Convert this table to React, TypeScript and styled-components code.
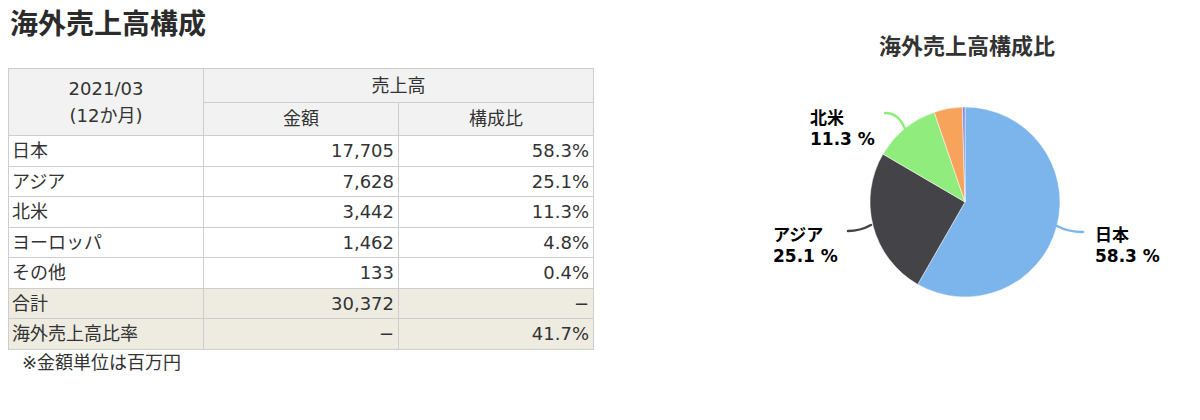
import React from "react";
import styled, { createGlobalStyle } from "styled-components";

const GlobalStyle = createGlobalStyle`
  html, body {
    margin: 0;
    padding: 0;
    background: #ffffff;
  }
  body {
    font-family: "DejaVu Sans", "Noto Sans CJK JP", sans-serif;
    color: #333333;
  }
`;

const Page = styled.div`
  display: flex;
  align-items: flex-start;
  padding: 0 8px;
  width: 1200px;
  box-sizing: border-box;
`;

const LeftColumn = styled.section`
  width: 586px;
  flex: none;
`;

const Heading = styled.h2`
  margin: 5px 0 29px 2px;
  font-family: "Noto Sans CJK JP", sans-serif;
  font-size: 28px;
  line-height: 34px;
  font-weight: 700;
  color: #2b2b2b;
`;

const Table = styled.table`
  width: 586px;
  border-collapse: collapse;
  table-layout: fixed;
  font-size: 18px;
  color: #333;
`;

const HeadCell = styled.th<{ $tall?: boolean }>`
  background: #f2f2f2;
  border: 1px solid #cdcdcd;
  font-weight: 400;
  text-align: center;
  padding: 0 4px;
  height: ${(p) => (p.$tall ? "33px" : "32px")};
  line-height: 28px;
`;

const HeadLine = styled.span`
  display: block;
  height: 28px;
  line-height: 28px;
  &:last-child {
    margin-top: -1px;
  }
`;

const Cell = styled.td<{ $align?: "left" | "right"; $sum?: boolean }>`
  background: ${(p) => (p.$sum ? "#eeebe1" : "#ffffff")};
  border: 1px solid #cdcdcd;
  text-align: ${(p) => p.$align ?? "left"};
  padding: 0 4px 0 3px;
  height: 29.5px;
  line-height: 29px;
  white-space: nowrap;
`;

const Note = styled.p`
  margin: 2px 0 0 14px;
  font-size: 18px;
  line-height: 22px;
`;

const RightColumn = styled.section`
  width: 420px;
  margin-left: 163px;
  flex: none;
  display: flex;
  flex-direction: column;
  align-items: center;
`;

const ChartTitle = styled.h3`
  margin: 29px 0 0 0;
  font-family: "Noto Sans CJK JP", sans-serif;
  font-size: 22px;
  line-height: 30px;
  font-weight: 700;
  color: #333333;
`;

const ChartSvg = styled.svg`
  display: block;
  overflow: visible;
`;

const LabelText = styled.text`
  font-family: "DejaVu Sans", "Noto Sans CJK JP", sans-serif;
  font-size: 17px;
  font-weight: 700;
  fill: #000000;
`;

type Row = { name: string; amount: string; ratio: string; sum?: boolean };

const rows: Row[] = [
  { name: "日本", amount: "17,705", ratio: "58.3%" },
  { name: "アジア", amount: "7,628", ratio: "25.1%" },
  { name: "北米", amount: "3,442", ratio: "11.3%" },
  { name: "ヨーロッパ", amount: "1,462", ratio: "4.8%" },
  { name: "その他", amount: "133", ratio: "0.4%" },
  { name: "合計", amount: "30,372", ratio: "−", sum: true },
  { name: "海外売上高比率", amount: "−", ratio: "41.7%", sum: true },
];

const slices = [
  { value: 17705, color: "#7cb5ec" },
  { value: 7628, color: "#434348" },
  { value: 3442, color: "#90ed7d" },
  { value: 1462, color: "#f7a35c" },
  { value: 133, color: "#8085e9" },
];

const CX = 208;
const CY = 143;
const R = 95;

function arcPath(a0: number, a1: number) {
  const x0 = CX + R * Math.cos(a0);
  const y0 = CY + R * Math.sin(a0);
  const x1 = CX + R * Math.cos(a1);
  const y1 = CY + R * Math.sin(a1);
  const large = a1 - a0 > Math.PI ? 1 : 0;
  return `M ${CX} ${CY} L ${x0} ${y0} A ${R} ${R} 0 ${large} 1 ${x1} ${y1} Z`;
}

function Pie() {
  const total = slices.reduce((s, d) => s + d.value, 0);
  let angle = -Math.PI / 2;
  const paths = slices.map((d, i) => {
    const a0 = angle;
    const a1 = angle + (d.value / total) * Math.PI * 2;
    angle = a1;
    return <path key={i} d={arcPath(a0, a1)} fill={d.color} stroke="#ffffff" strokeWidth={0.5} />;
  });
  return (
    <ChartSvg width={420} height={300} viewBox="0 0 420 300">
      {paths}
      <path d="M 300 167 Q 311 173 326 173" fill="none" stroke="#7cb5ec" strokeWidth={2.5} strokeLinecap="round" />
      <path d="M 114 166 Q 103 172 91 172" fill="none" stroke="#434348" strokeWidth={2.5} strokeLinecap="round" />
      <path d="M 128 54 Q 142 54 148 70" fill="none" stroke="#90ed7d" strokeWidth={2.5} strokeLinecap="round" />
      <LabelText x={338} y={182}>日本</LabelText>
      <LabelText x={338} y={203}>58.3 %</LabelText>
      <LabelText x={16} y={182}>アジア</LabelText>
      <LabelText x={16} y={203}>25.1 %</LabelText>
      <LabelText x={53} y={65}>北米</LabelText>
      <LabelText x={53} y={86}>11.3 %</LabelText>
    </ChartSvg>
  );
}

export default function App() {
  return (
    <>
      <GlobalStyle />
      <Page>
        <LeftColumn>
          <Heading>海外売上高構成</Heading>
          <Table>
            <thead>
              <tr>
                <HeadCell rowSpan={2}>
                  <HeadLine>2021/03</HeadLine>
                  <HeadLine>(12か月)</HeadLine>
                </HeadCell>
                <HeadCell colSpan={2} $tall>売上高</HeadCell>
              </tr>
              <tr>
                <HeadCell>金額</HeadCell>
                <HeadCell>構成比</HeadCell>
              </tr>
            </thead>
            <tbody>
              {rows.map((r) => (
                <tr key={r.name}>
                  <Cell $sum={r.sum}>{r.name}</Cell>
                  <Cell $align="right" $sum={r.sum}>{r.amount}</Cell>
                  <Cell $align="right" $sum={r.sum}>{r.ratio}</Cell>
                </tr>
              ))}
            </tbody>
          </Table>
          <Note>※金額単位は百万円</Note>
        </LeftColumn>
        <RightColumn>
          <ChartTitle>海外売上高構成比</ChartTitle>
          <Pie />
        </RightColumn>
      </Page>
    </>
  );
}
